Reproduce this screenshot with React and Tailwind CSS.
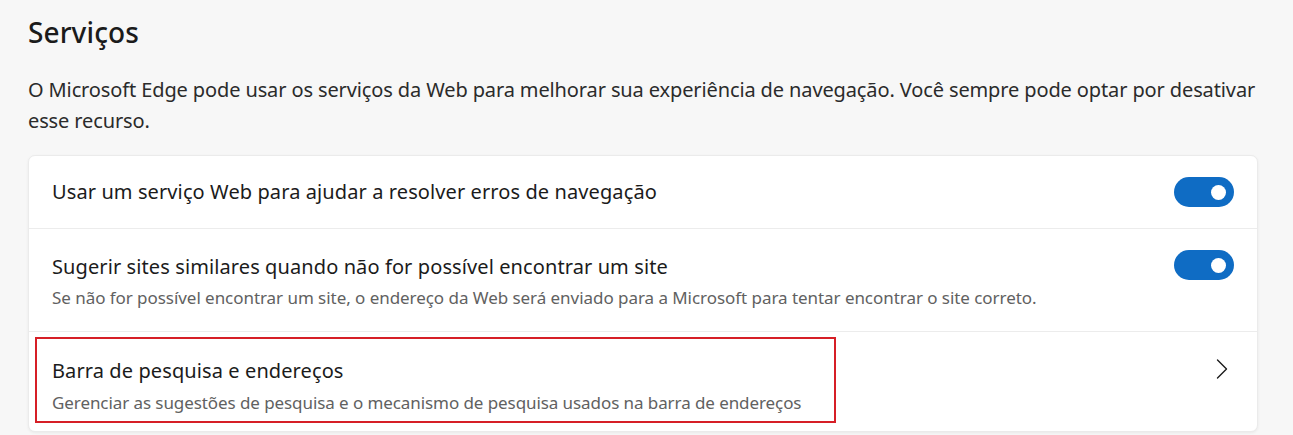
const font = { fontFamily: '"Noto Sans", "Open Sans", sans-serif' };

function Toggle() {
  return (
    <div className="w-[60px] h-[30px] rounded-full bg-[#0f6cc4] flex items-center justify-end pr-[8px] shrink-0">
      <div className="w-[15px] h-[15px] rounded-full bg-white" />
    </div>
  );
}

export default function App() {
  return (
    <div className="w-[1293px] h-[435px] overflow-hidden bg-[#f7f7f7] text-[#1b1b1b]" style={font}>
      <div className="px-[28px] pt-[13px]">
        <h1 className="text-[28px] leading-[38px] font-medium tracking-[0.1px]">Serviços</h1>
        <p className="mt-[23px] text-[20px] leading-[31px] text-[#2b2b2b] tracking-[-0.12px] w-[1240px]">
          O Microsoft Edge pode usar os serviços da Web para melhorar sua experiência de navegação. Você sempre pode optar por desativar esse recurso.
        </p>
        <div className="mt-[19px] w-[1230px] bg-white rounded-[7px] border border-[#ebebeb] shadow-[0_1px_3px_rgba(0,0,0,0.06)]">
          <div className="h-[73px] px-[23px] flex items-center justify-between border-b border-[#ececec]">
            <span className="text-[20px] tracking-[0.1px]">Usar um serviço Web para ajudar a resolver erros de navegação</span>
            <Toggle />
          </div>
          <div className="h-[103px] px-[23px] pt-[21px] flex justify-between border-b border-[#ececec]">
            <div className="pt-[3px]">
              <div className="text-[20px] leading-[28px] tracking-[0.1px]">Sugerir sites similares quando não for possível encontrar um site</div>
              <div className="mt-[5px] text-[17px] leading-[24px] text-[#616161] tracking-[-0.05px]">
                Se não for possível encontrar um site, o endereço da Web será enviado para a Microsoft para tentar encontrar o site correto.
              </div>
            </div>
            <Toggle />
          </div>
          <div className="h-[99px] pl-[6px] pr-[29px] pt-[5px] flex justify-between">
            <div className="w-[801px] h-[86px] border-2 border-[#d61f26] pl-[15px] pt-[18px]">
              <div className="text-[20px] leading-[28px] tracking-[0.1px]">Barra de pesquisa e endereços</div>
              <div className="mt-[6px] text-[17px] leading-[24px] text-[#616161] tracking-[-0.08px]">
                Gerenciar as sugestões de pesquisa e o mecanismo de pesquisa usados na barra de endereços
              </div>
            </div>
            <svg className="mt-[22px]" width="12" height="20" viewBox="0 0 12 20" fill="none">
              <path d="M1.5 1 L10.5 10 L1.5 19" stroke="#1b1b1b" strokeWidth="1.4" strokeLinecap="round" strokeLinejoin="round" />
            </svg>
          </div>
        </div>
      </div>
    </div>
  );
}
